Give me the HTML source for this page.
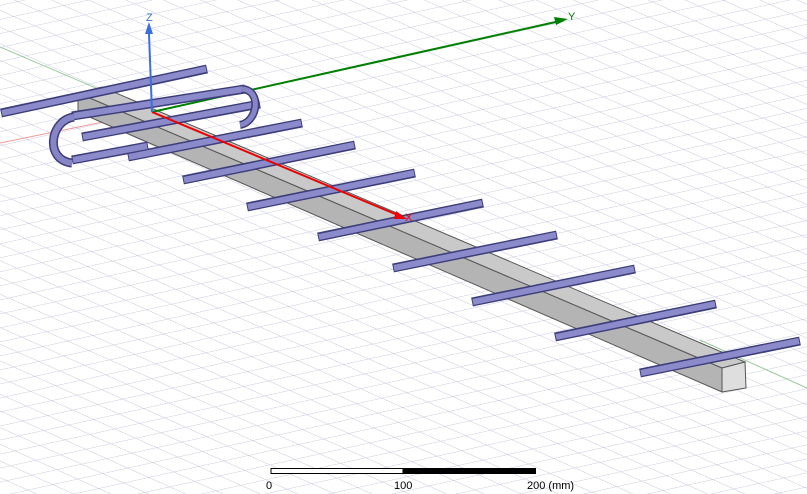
<!DOCTYPE html>
<html><head><style>
html,body{margin:0;padding:0;background:#fff;width:807px;height:494px;overflow:hidden}
svg{display:block}
text{font-family:"Liberation Sans",sans-serif}
</style></head><body>
<svg width="807" height="494" viewBox="0 0 807 494" xmlns="http://www.w3.org/2000/svg">
<defs>
<pattern id="g" patternUnits="userSpaceOnUse" width="1" height="1" patternTransform="matrix(21,9.4,25,-5.5,152,112)">
<path d="M0 0H1M0 0V1" fill="none" stroke="#c2c2dd" stroke-width="0.06"/>
</pattern>
</defs>
<rect width="807" height="494" fill="#fff"/>
<rect width="807" height="494" fill="url(#g)"/>
<line x1="0" y1="47" x2="152" y2="112" stroke="#9c9" stroke-width="1"/>
<line x1="700" y1="340" x2="807" y2="388" stroke="#9c9" stroke-width="1"/>
<line x1="0" y1="143" x2="152" y2="112" stroke="#e99" stroke-width="1"/>
<polygon points="78,112 722,392 722,368 78,93" fill="#b4b4b4" stroke="#555" stroke-width="1"/>
<polygon points="78,93 102,87 745,362 722,368" fill="#c9c9c9" stroke="#555" stroke-width="1"/>
<polygon points="722,368 745,362 746,388 722,392" fill="#dedede" stroke="#555" stroke-width="1"/>
<line x1="152" y1="112" x2="560" y2="21" stroke="#008000" stroke-width="2"/>
<polygon points="568,19 554,17 556,25" fill="#008000"/>
<text x="568" y="20" font-size="11" fill="#008000">Y</text>
<g stroke-linecap="butt">
<g stroke="#3d3d7a" stroke-width="9">
<line x1="1" y1="113" x2="207" y2="69"/>
<line x1="72" y1="116" x2="245" y2="89"/>
<line x1="72" y1="160" x2="148" y2="146"/>
<line x1="82" y1="137" x2="260" y2="104"/>
<line x1="128" y1="157" x2="302" y2="123"/>
<line x1="183" y1="180" x2="355" y2="145"/>
<line x1="247" y1="207" x2="415" y2="173"/>
<line x1="318" y1="237" x2="483" y2="203"/>
<line x1="393" y1="268" x2="557" y2="235"/>
<line x1="472" y1="302" x2="635" y2="269"/>
<line x1="555" y1="337" x2="716" y2="304"/>
<line x1="640" y1="373" x2="800" y2="341"/>
</g>
<g stroke="#8b8bcc" stroke-width="6">
<line x1="2" y1="113" x2="206" y2="69"/>
<line x1="73" y1="116" x2="244" y2="89"/>
<line x1="73" y1="160" x2="147" y2="146"/>
<line x1="83" y1="137" x2="259" y2="104"/>
<line x1="129" y1="157" x2="301" y2="123"/>
<line x1="184" y1="180" x2="354" y2="145"/>
<line x1="248" y1="207" x2="414" y2="173"/>
<line x1="319" y1="237" x2="482" y2="203"/>
<line x1="394" y1="268" x2="556" y2="235"/>
<line x1="473" y1="302" x2="634" y2="269"/>
<line x1="556" y1="337" x2="715" y2="304"/>
<line x1="641" y1="373" x2="799" y2="341"/>
</g>
</g>
<path d="M74 117 C50 120 44 160 72 163" fill="none" stroke="#3d3d7a" stroke-width="9"/>
<path d="M74 117 C50 120 44 160 72 163" fill="none" stroke="#8686c6" stroke-width="6"/>
<path d="M242 89 C262 90 258 122 240 125" fill="none" stroke="#3d3d7a" stroke-width="8"/>
<path d="M242 89 C262 90 258 122 240 125" fill="none" stroke="#8686c6" stroke-width="5"/>
<line x1="152" y1="112" x2="400" y2="216" stroke="#e00" stroke-width="2"/>
<polygon points="407,219 396,211 394,219" fill="#e00"/>
<text x="405" y="221" font-size="11" fill="#e00">X</text>
<line x1="152" y1="112" x2="149" y2="34" stroke="#3a6fdc" stroke-width="2"/>
<polygon points="149,22 145,34 153,34" fill="#3a6fdc"/>
<text x="146" y="21" font-size="11" fill="#3a6fdc">Z</text>
<rect x="271" y="468.5" width="132" height="5" fill="#fff" stroke="#000" stroke-width="1"/>
<rect x="403" y="468" width="133" height="6" fill="#000"/>
<text x="266" y="489" font-size="11" fill="#000">0</text>
<text x="394" y="489" font-size="11" fill="#000">100</text>
<text x="527" y="489" font-size="11" fill="#000">200 (mm)</text>
</svg>
</body></html>
